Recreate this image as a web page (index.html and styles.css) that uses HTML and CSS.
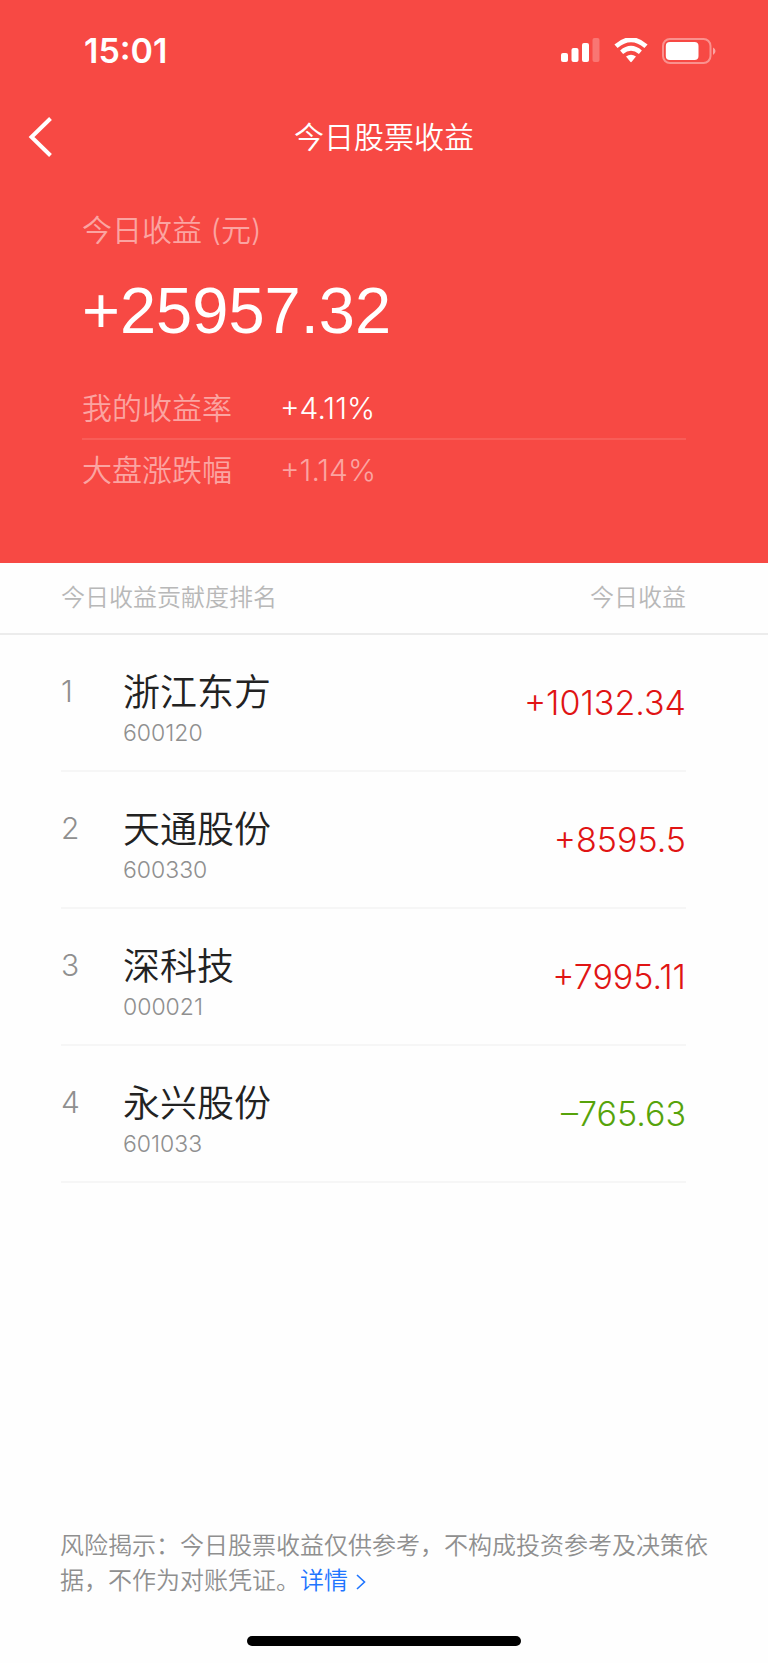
FILE: index.html
```
<!DOCTYPE html>
<html lang="zh-CN">
<head>
<meta charset="utf-8">
<meta name="viewport" content="width=device-width, initial-scale=1">
<title>今日股票收益</title>
<link rel="stylesheet" href="styles.css">
</head>
<body>
<header class="hero">
  <div class="status">
    <time class="clock">15:01</time>
    <div class="status-icons">
      <svg width="39" height="26" viewBox="0 0 39 26" fill="#fff" aria-hidden="true">
        <rect x="0" y="15" width="7" height="9" rx="2"/>
        <rect x="10.500" y="10" width="7" height="14" rx="2"/>
        <rect x="21" y="5" width="7" height="19" rx="2"/>
        <rect x="31.500" y="0" width="7" height="24" rx="2" opacity=".25"/>
      </svg>
      <svg width="34" height="26" viewBox="0 0 34 26" aria-hidden="true">
        <path d="M2 8.300Q17-4.900 32 8.300" fill="none" stroke="#fff" stroke-width="4.800"/>
        <path d="M7.600 14.200Q17 6.300 26.400 14.200" fill="none" stroke="#fff" stroke-width="4.600"/>
        <path d="M12 18.500Q17 15 22 18.500L17.700 23.800Q17 24.600 16.300 23.800Z" fill="#fff"/>
      </svg>
      <svg width="54" height="26" viewBox="0 0 54 26" aria-hidden="true">
        <rect x="1" y="1" width="47.500" height="24" rx="7" fill="none" stroke="#fff" stroke-opacity=".4" stroke-width="2"/>
        <rect x="3.800" y="4" width="32.700" height="18" rx="4" fill="#fff"/>
        <path d="M51 9.500Q53.500 10.500 53.500 13T51 17Z" fill="#fff" opacity=".5"/>
      </svg>
    </div>
  </div>
  <nav class="navbar">
    <button class="back" type="button" aria-label="返回">
      <svg width="24" height="40" viewBox="0 0 24 40" aria-hidden="true"><path d="M22.500 1.500L3.500 20L22.500 38.500" fill="none" stroke="#fff" stroke-width="4"/></svg>
    </button>
    <h1 class="title">今日股票收益</h1>
  </nav>
  <section class="summary">
    <p class="label">今日收益 (元)</p>
    <p class="total">+25957.32</p>
    <dl class="rates">
      <div class="rate"><dt>我的收益率</dt><dd class="bright">+4.11%</dd></div>
      <div class="rate"><dt>大盘涨跌幅</dt><dd>+1.14%</dd></div>
    </dl>
  </section>
</header>
<main>
  <table class="ranking">
    <thead>
      <tr class="head"><th scope="col">今日收益贡献度排名</th><th scope="col">今日收益</th></tr>
    </thead>
    <tbody>
      <tr class="row"><td class="rank">1</td><td class="stock"><span class="name">浙江东方</span><span class="code">600120</span></td><td class="amount up">+10132.34</td></tr>
      <tr class="row"><td class="rank">2</td><td class="stock"><span class="name">天通股份</span><span class="code">600330</span></td><td class="amount up">+8595.5</td></tr>
      <tr class="row"><td class="rank">3</td><td class="stock"><span class="name">深科技</span><span class="code">000021</span></td><td class="amount up">+7995.11</td></tr>
      <tr class="row"><td class="rank">4</td><td class="stock"><span class="name">永兴股份</span><span class="code">601033</span></td><td class="amount down">–765.63</td></tr>
    </tbody>
  </table>
</main>
<footer class="footer">
  <p class="notice">风险揭示：今日股票收益仅供参考，不构成投资参考及决策依据，不作为对账凭证。<a href="#details">详情<svg class="more" width="10" height="16" viewBox="0 0 10 16" aria-hidden="true"><path d="M1 1L8.500 8L1 15" fill="none" stroke="currentColor" stroke-width="1.600"/></svg></a></p>
  <div class="home-indicator"></div>
</footer>
</body>
</html>
```
FILE: styles.css
```
* { box-sizing: border-box; }

body {
  margin: 0;
  min-height: 100vh;
  display: flex;
  flex-direction: column;
  background: #fefefe;
  color: #222;
  font-family: Inter, "Noto Sans CJK SC", sans-serif;
  font-weight: 350;
}

h1, p, dl, dd { margin: 0; font-weight: 350; }

.hero {
  background: #f74944;
  color: #fff;
  padding-bottom: 64px;
}

.status {
  height: 102px;
  padding: 0 52px 0 84px;
  display: flex;
  align-items: center;
  justify-content: space-between;
}

.clock { font-size: 34px; font-weight: 600; line-height: 40px; }

.status-icons { display: flex; align-items: center; gap: 14px; }

.navbar {
  height: 70px;
  padding: 0 28px;
  display: grid;
  grid-template-columns: 24px 1fr 24px;
  align-items: center;
}

.back {
  display: flex;
  padding: 0;
  border: 0;
  background: none;
  cursor: pointer;
}

.title { font-size: 30px; line-height: 40px; text-align: center; }

.summary { padding: 38px 82px 0; }

.label {
  font-size: 30px;
  line-height: 40px;
  color: #fba4a1;
}

.total {
  margin-top: 21px;
  font-family: "Liberation Sans", Arial, sans-serif;
  font-size: 65px;
  font-weight: 400;
  line-height: 80px;
}

.rates { margin-top: 26px; }

.rate {
  display: flex;
  align-items: center;
  height: 61px;
  font-size: 30px;
  line-height: 40px;
  color: #fba4a1;
}

.rate + .rate { border-top: 2px solid #f85d58; }

.rate dt { width: 198px; }

.rate .bright { color: #fff; }

.ranking, .ranking thead, .ranking tbody { display: block; }

.ranking thead { border-bottom: 2px solid #ececec; }

.head, .row {
  display: grid;
  align-items: center;
  margin: 0 82px 0 61px;
}

.head { grid-template-columns: 1fr auto; height: 70px; }

.head th {
  padding: 0;
  font-size: 24px;
  line-height: 32px;
  font-weight: 350;
  text-align: left;
  color: #b8b8b8;
}

.row {
  grid-template-columns: 62px 1fr auto;
  height: 137px;
  border-bottom: 2px solid #f6f6f6;
}

.row td { padding: 0; }

.row .rank {
  align-self: start;
  padding-top: 36px;
  font-size: 30px;
  line-height: 40px;
  color: #8f8f8f;
}

.row .stock { display: flex; flex-direction: column; padding-top: 12px; }

.name { font-size: 37px; line-height: 48px; }

.code { font-size: 23px; line-height: 32px; color: #8f8f8f; }

.amount { font-size: 34px; line-height: 40px; }

.up { color: #e01414; }

.down { color: #56a30a; }

.footer { margin-top: auto; padding: 0 60px 17px; }

.notice {
  margin-right: -4px;
  font-size: 24px;
  line-height: 35px;
  color: #8f8f8f;
}

.notice a { color: #1f75ff; text-decoration: none; }

.more { margin-left: 8px; vertical-align: -1px; }

.home-indicator {
  width: 274px;
  height: 10px;
  margin: 38px auto 0;
  border-radius: 5px;
  background: #000;
}
```
